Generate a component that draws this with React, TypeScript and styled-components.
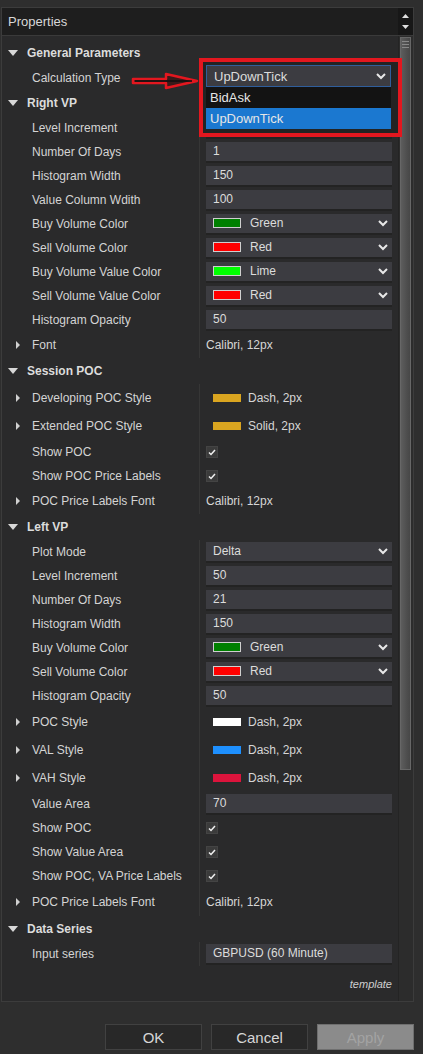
import React from 'react'
import styled, { createGlobalStyle } from 'styled-components'

const GlobalStyle = createGlobalStyle`
	html, body {
		margin: 0;
		padding: 0;
		background: #2e2e2e;
	}
	body {
		font-family: "Liberation Sans", Arial, sans-serif;
		font-size: 12px;
		color: #d6d6d6;
	}
`

const Page = styled.div`
	width: 423px;
	height: 1054px;
	padding-top: 7px;
	box-sizing: border-box;
	background: #2e2e2e;
`

const Panel = styled.div`
	margin-left: 1px;
	width: 413px;
	border: 1px solid #3c3c3c;
	box-sizing: border-box;
	background: #2a2a2b;
`

const TitleBar = styled.div`
	display: flex;
	height: 27px;
	border-bottom: 1px solid #3a3a3a;
`

const Title = styled.div`
	flex: 1;
	display: flex;
	align-items: center;
	padding-left: 6px;
	background: #1e1e1e;
	font-size: 13px;
	color: #d8d8d8;
`

const ScrollButtons = styled.div`
	width: 15px;
	background: #171717;
	display: flex;
	flex-direction: column;
	align-items: center;
	justify-content: center;
	gap: 7px;
`

const Body = styled.div`
	display: flex;
	position: relative;
`

const Grid = styled.div`
	flex: 1;
	padding-top: 4px;
	position: relative;
`

const Track = styled.div`
	width: 14px;
	border-left: 1px solid #242424;
	background: #2c2c2c;
	padding-top: 1px;
`

const Thumb = styled.div`
	margin-left: 1px;
	width: 11px;
	height: 733px;
	box-sizing: border-box;
	background: linear-gradient(90deg, #5d5d5d, #4f4f4f 60%, #474747);
	border: 1px solid #676767;
	display: flex;
	flex-direction: column;
	align-items: center;
	padding-top: 3px;
	gap: 2px;
`

const Grip = styled.span`
	width: 7px;
	height: 1px;
	background: #888;
`

const Row = styled.div<{ $h: number }>`
	display: grid;
	grid-template-columns: 197px 1fr;
	height: ${(p) => p.$h}px;
	align-items: stretch;
`

const Header = styled.div<{ $h: number }>`
	height: ${(p) => p.$h}px;
	display: flex;
	align-items: center;
	padding-left: 6px;
	gap: 9px;
	font-weight: bold;
	color: #dcdcdc;
`

const Label = styled.div`
	display: flex;
	align-items: center;
	padding-left: 14px;
	gap: 12px;
	color: #d4d4d4;
`

const Spacer = styled.span`
	width: 4px;
`

const Value = styled.div`
	display: flex;
	align-items: center;
	border-left: 1px solid #363636;
	padding: 0 6px 0 6px;
`

const Box = styled.div`
	flex: 1;
	height: 21px;
	display: flex;
	align-items: center;
	padding: 0 4px 0 7px;
	gap: 9px;
	background: #3c3c41;
	border-bottom: 2px solid #232323;
	box-sizing: border-box;
	color: #dcdcdc;
`

const Swatch = styled.span<{ $c: string; $border?: boolean }>`
	width: 28px;
	height: ${(p) => (p.$border ? 10 : 8)}px;
	background: ${(p) => p.$c};
	border: ${(p) => (p.$border ? '1px solid #cfcfcf' : 'none')};
	box-sizing: border-box;
	flex: none;
`

const BoxText = styled.span`
	flex: 1;
`

const Plain = styled.div<{ $indent?: boolean }>`
	display: flex;
	align-items: center;
	gap: 7px;
	padding-left: ${(p) => (p.$indent ? 7 : 0)}px;
	color: #d6d6d6;
`

const CheckBox = styled.span`
	width: 12px;
	height: 12px;
	background: #3b3b3b;
	border: 1px solid #444;
	box-sizing: border-box;
	display: flex;
	align-items: center;
	justify-content: center;
`

const Template = styled.div`
	height: 35px;
	display: flex;
	align-items: center;
	justify-content: flex-end;
	padding-right: 6px;
	font-style: italic;
	font-size: 11px;
	color: #cfcfcf;
`

const Callout = styled.div`
	position: absolute;
	left: 197px;
	top: 22px;
	width: 203px;
	height: 79px;
	border: 4px solid #e3171f;
	box-sizing: border-box;
	background: #232323;
	padding: 3px 7px 0 3px;
`

const Select = styled.div`
	height: 22px;
	display: flex;
	align-items: center;
	padding: 0 4px 0 7px;
	background: #3c3c41;
	border: 1px solid #2f5e9c;
	box-sizing: border-box;
	font-size: 13px;
	color: #dcdcdc;
`

const Option = styled.div<{ $active?: boolean }>`
	height: 21px;
	display: flex;
	align-items: center;
	padding-left: 4px;
	font-size: 13px;
	background: ${(p) => (p.$active ? '#1b78d0' : '#131313')};
	color: #e6e6e6;
`

const Arrow = styled.svg`
	position: absolute;
	left: 126px;
	top: 35px;
`

const ButtonBar = styled.div`
	display: flex;
	justify-content: flex-end;
	gap: 9px;
	padding: 22px 9px 0 0;
`

const Button = styled.div<{ $disabled?: boolean }>`
	width: 97px;
	height: 26px;
	display: flex;
	align-items: center;
	justify-content: center;
	box-sizing: border-box;
	font-size: 15px;
	background: ${(p) => (p.$disabled ? '#8b8b8b' : '#282828')};
	border: 1px solid ${(p) => (p.$disabled ? '#6f6f6f' : '#414141')};
	color: ${(p) => (p.$disabled ? '#a3a3a3' : '#d6d6d6')};
`

const DownTri = () => (
	<svg width="10" height="6" viewBox="0 0 10 6">
		<polygon points="0,0 10,0 5,6" fill="#d8d8d8" />
	</svg>
)

const RightTri = () => (
	<svg width="4" height="8" viewBox="0 0 4 8">
		<polygon points="0,0 4,4 0,8" fill="#d0d0d0" />
	</svg>
)

const Chevron = () => (
	<svg width="10" height="7" viewBox="0 0 10 7">
		<polyline points="1,1 5,5 9,1" fill="none" stroke="#e8e8e8" strokeWidth="2" />
	</svg>
)

const Tick = () => (
	<svg width="8" height="7" viewBox="0 0 8 7">
		<polyline points="1,3.5 3,5.5 7,1" fill="none" stroke="#f0f0f0" strokeWidth="1.5" />
	</svg>
)

type Item =
	| { kind: 'head'; label: string }
	| { kind: 'text'; label: string; value: string }
	| { kind: 'color'; label: string; value: string; color: string }
	| { kind: 'line'; label: string; value: string; color: string }
	| { kind: 'check'; label: string }
	| { kind: 'font'; label: string; value: string; h?: number }
	| { kind: 'select'; label: string; value: string }
	| { kind: 'open'; label: string }

const items: Item[] = [
	{ kind: 'head', label: 'General Parameters' },
	// value drawn by the open dropdown callout
	{ kind: 'open', label: 'Calculation Type' },
	{ kind: 'head', label: 'Right VP' },
	{ kind: 'text', label: 'Level Increment', value: '' },
	{ kind: 'text', label: 'Number Of Days', value: '1' },
	{ kind: 'text', label: 'Histogram Width', value: '150' },
	{ kind: 'text', label: 'Value Column Wdith', value: '100' },
	{ kind: 'color', label: 'Buy Volume Color', value: 'Green', color: '#008000' },
	{ kind: 'color', label: 'Sell Volume Color', value: 'Red', color: '#ff0000' },
	{ kind: 'color', label: 'Buy Volume Value Color', value: 'Lime', color: '#00ff00' },
	{ kind: 'color', label: 'Sell Volume Value Color', value: 'Red', color: '#ff0000' },
	{ kind: 'text', label: 'Histogram Opacity', value: '50' },
	{ kind: 'font', label: 'Font', value: 'Calibri, 12px' },
	{ kind: 'head', label: 'Session POC' },
	{ kind: 'line', label: 'Developing POC Style', value: 'Dash, 2px', color: '#daa520' },
	{ kind: 'line', label: 'Extended POC Style', value: 'Solid, 2px', color: '#daa520' },
	{ kind: 'check', label: 'Show POC' },
	{ kind: 'check', label: 'Show POC Price Labels' },
	{ kind: 'font', label: 'POC Price Labels Font', value: 'Calibri, 12px' },
	{ kind: 'head', label: 'Left VP' },
	{ kind: 'select', label: 'Plot Mode', value: 'Delta' },
	{ kind: 'text', label: 'Level Increment', value: '50' },
	{ kind: 'text', label: 'Number Of Days', value: '21' },
	{ kind: 'text', label: 'Histogram Width', value: '150' },
	{ kind: 'color', label: 'Buy Volume Color', value: 'Green', color: '#008000' },
	{ kind: 'color', label: 'Sell Volume Color', value: 'Red', color: '#ff0000' },
	{ kind: 'text', label: 'Histogram Opacity', value: '50' },
	{ kind: 'line', label: 'POC Style', value: 'Dash, 2px', color: '#ffffff' },
	{ kind: 'line', label: 'VAL Style', value: 'Dash, 2px', color: '#1e90ff' },
	{ kind: 'line', label: 'VAH Style', value: 'Dash, 2px', color: '#dc143c' },
	{ kind: 'text', label: 'Value Area', value: '70' },
	{ kind: 'check', label: 'Show POC' },
	{ kind: 'check', label: 'Show Value Area' },
	{ kind: 'check', label: 'Show POC, VA Price Labels' },
	{ kind: 'font', label: 'POC Price Labels Font', value: 'Calibri, 12px', h: 28 },
	{ kind: 'head', label: 'Data Series' },
	{ kind: 'text', label: 'Input series', value: 'GBPUSD (60 Minute)' }
]

const heights: Record<Item['kind'], number> = {
	head: 26,
	text: 24,
	color: 24,
	select: 24,
	open: 24,
	check: 24,
	line: 28,
	font: 26
}

const renderValue = (it: Item) => {
	switch (it.kind) {
		case 'text':
			return (
				<Box>
					<BoxText>{it.value}</BoxText>
				</Box>
			)
		case 'select':
			return (
				<Box>
					<BoxText>{it.value}</BoxText>
					<Chevron />
				</Box>
			)
		case 'color':
			return (
				<Box>
					<Swatch $c={it.color} $border />
					<BoxText>{it.value}</BoxText>
					<Chevron />
				</Box>
			)
		case 'line':
			return (
				<Plain $indent>
					<Swatch $c={it.color} />
					<span>{it.value}</span>
				</Plain>
			)
		case 'check':
			return (
				<CheckBox>
					<Tick />
				</CheckBox>
			)
		case 'font':
			return <Plain>{it.value}</Plain>
		default:
			return null
	}
}

const expandable = (it: Item) => it.kind === 'line' || it.kind === 'font'

const rowHeight = (it: Item) => (it.kind === 'font' && it.h ? it.h : heights[it.kind])

export default function App() {
	return (
		<Page>
			<GlobalStyle />
			<Panel>
				<TitleBar>
					<Title>Properties</Title>
					<ScrollButtons>
						<svg width="7" height="4" viewBox="0 0 7 4">
							<polygon points="0,4 7,4 3.5,0" fill="#e0e0e0" />
						</svg>
						<svg width="7" height="4" viewBox="0 0 7 4">
							<polygon points="0,0 7,0 3.5,4" fill="#e0e0e0" />
						</svg>
					</ScrollButtons>
				</TitleBar>
				<Body>
					<Grid>
						{items.map((it, i) =>
							it.kind === 'head' ? (
								<Header key={i} $h={heights.head}>
									<DownTri />
									{it.label}
								</Header>
							) : (
								<Row key={i} $h={rowHeight(it)}>
									<Label>
										{expandable(it) ? <RightTri /> : <Spacer />}
										{it.label}
									</Label>
									<Value>{renderValue(it)}</Value>
								</Row>
							)
						)}
						<Template>template</Template>

						<Arrow width="72" height="20" viewBox="0 0 72 20">
							<path
								d="M5 8 L38 8 L38 3 L69 10 L38 17 L38 12 L5 12 Z"
								fill="#3a1a1a"
								stroke="#e3171f"
								strokeWidth="2.5"
								strokeLinejoin="round"
							/>
							<line x1="7" y1="10" x2="64" y2="10" stroke="#111" strokeWidth="1.6" />
						</Arrow>
						<Callout>
							<Select>
								<BoxText>UpDownTick</BoxText>
								<Chevron />
							</Select>
							<Option>BidAsk</Option>
							<Option $active>UpDownTick</Option>
						</Callout>
					</Grid>
					<Track>
						<Thumb>
							<Grip />
							<Grip />
							<Grip />
						</Thumb>
					</Track>
				</Body>
			</Panel>
			<ButtonBar>
				<Button>OK</Button>
				<Button>Cancel</Button>
				<Button $disabled>Apply</Button>
			</ButtonBar>
		</Page>
	)
}
